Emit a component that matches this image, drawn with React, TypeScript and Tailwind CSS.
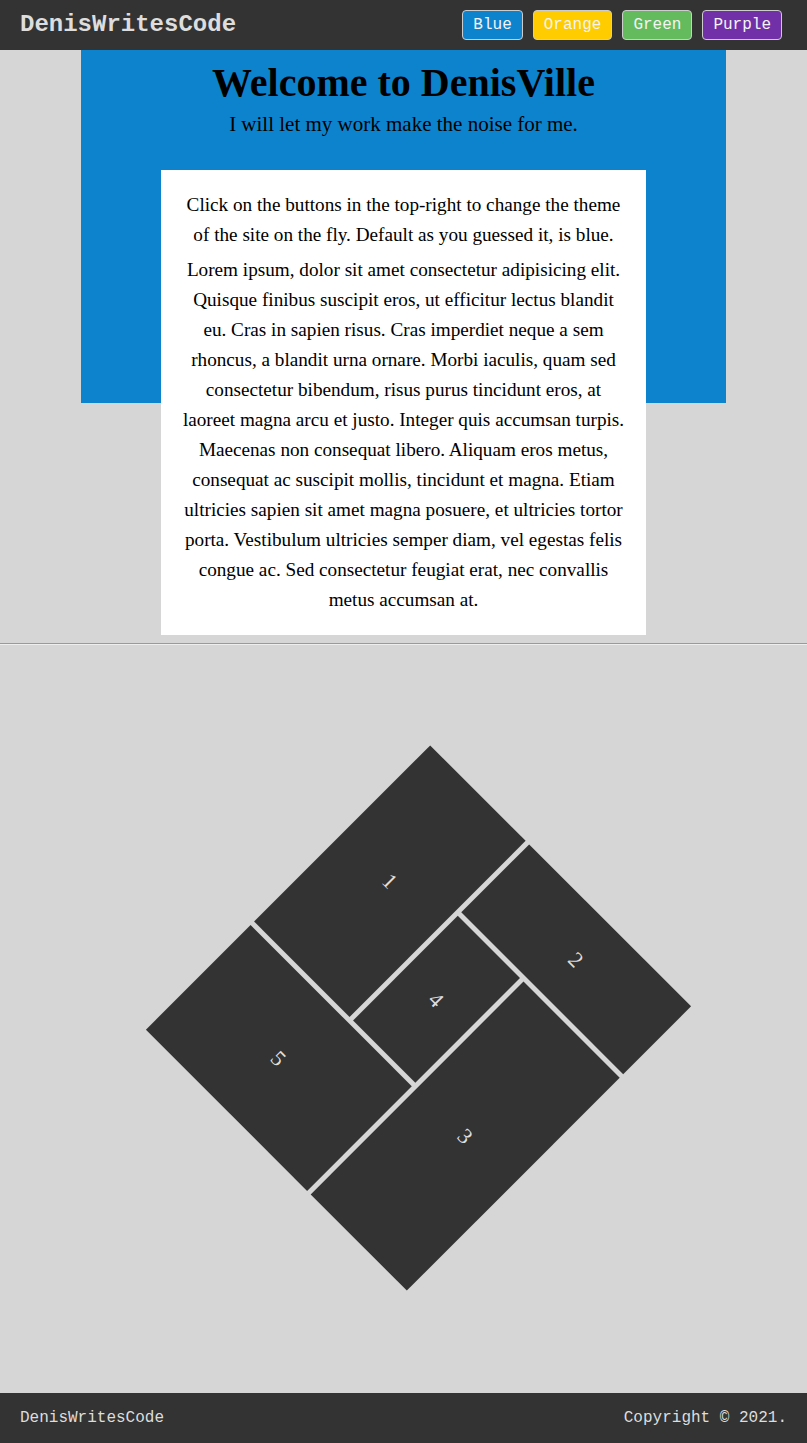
import React from "react";

const buttons = [
  { label: "Blue", cls: "bg-[#0e83cd]" },
  { label: "Orange", cls: "bg-[#ffcc00]" },
  { label: "Green", cls: "bg-[#63bb5e]" },
  { label: "Purple", cls: "bg-[#7130a8]" },
];

export default function App() {
  return (
    <div className="min-h-screen bg-[#d6d6d6] font-['Liberation_Serif',serif] text-black">
      <header className="h-[50px] bg-[#333333] flex items-center justify-between pl-5 pr-[25px]">
        <span className="font-['Liberation_Mono',monospace] text-[24px] font-bold text-[#dddddd] leading-none">
          DenisWritesCode
        </span>
        <div className="flex gap-[10px]">
          {buttons.map((b) => (
            <button
              key={b.label}
              className={`${b.cls} h-[30px] px-[10px] border border-[#cccccc] rounded-[4px] font-['Liberation_Mono',monospace] text-[16px] leading-[18px] text-[#f4f4f4]`}
            >
              {b.label}
            </button>
          ))}
        </div>
      </header>

      <section className="w-[80%] mx-auto pt-[10px] bg-[linear-gradient(to_bottom,#0e83cd_353px,transparent_353px)]">
        <h1 className="text-[40px] leading-[46px] font-bold text-center">Welcome to DenisVille</h1>
        <p className="mt-[6px] text-[21px] leading-[24px] text-center">
          I will let my work make the noise for me.
        </p>
        <div className="mt-[34px] w-[485px] mx-auto bg-white p-5 text-[19.2px] leading-[30px] text-center">
          <p className="mb-[5px]">
            Click on the buttons in the top-right to change the theme of the site on the fly. Default as you guessed it, is blue.
          </p>
          <p>
            Lorem ipsum, dolor sit amet consectetur adipisicing elit. Quisque finibus suscipit eros, ut efficitur lectus blandit eu. Cras in sapien risus. Cras imperdiet neque a sem rhoncus, a blandit urna ornare. Morbi iaculis, quam sed consectetur bibendum, risus purus tincidunt eros, at laoreet magna arcu et justo. Integer quis accumsan turpis. Maecenas non consequat libero. Aliquam eros metus, consequat ac suscipit mollis, tincidunt et magna. Etiam ultricies sapien sit amet magna posuere, et ultricies tortor porta. Vestibulum ultricies semper diam, vel egestas felis congue ac. Sed consectetur feugiat erat, nec convallis metus accumsan at.
          </p>
        </div>
      </section>

      <div className="mt-2 mb-2 h-[2px] border-t border-b border-t-[#9a9a9a] border-b-[#eeeeee]" />

      <section className="h-[740px] pl-[234px] pt-[164px]">
        <div className="grid grid-cols-[135px_88px_136px] grid-rows-[96px_148px_148px] gap-[5px] w-[369px] h-[402px] rotate-45 font-['Liberation_Serif',serif] text-[22px] text-[#dddddd]">
          <div className="col-start-1 row-start-1 row-span-2 bg-[#333333] flex items-center justify-center">1</div>
          <div className="col-start-2 col-span-2 row-start-1 bg-[#333333] flex items-center justify-center">2</div>
          <div className="col-start-2 row-start-2 bg-[#333333] flex items-center justify-center">4</div>
          <div className="col-start-3 row-start-2 row-span-2 bg-[#333333] flex items-center justify-center">3</div>
          <div className="col-start-1 col-span-2 row-start-3 bg-[#333333] flex items-center justify-center">5</div>
        </div>
      </section>

      <footer className="h-[50px] bg-[#333333] flex items-center justify-between px-5 font-['Liberation_Mono',monospace] text-[16px] text-[#dddddd]">
        <span>DenisWritesCode</span>
        <span>Copyright © 2021.</span>
      </footer>
    </div>
  );
}
